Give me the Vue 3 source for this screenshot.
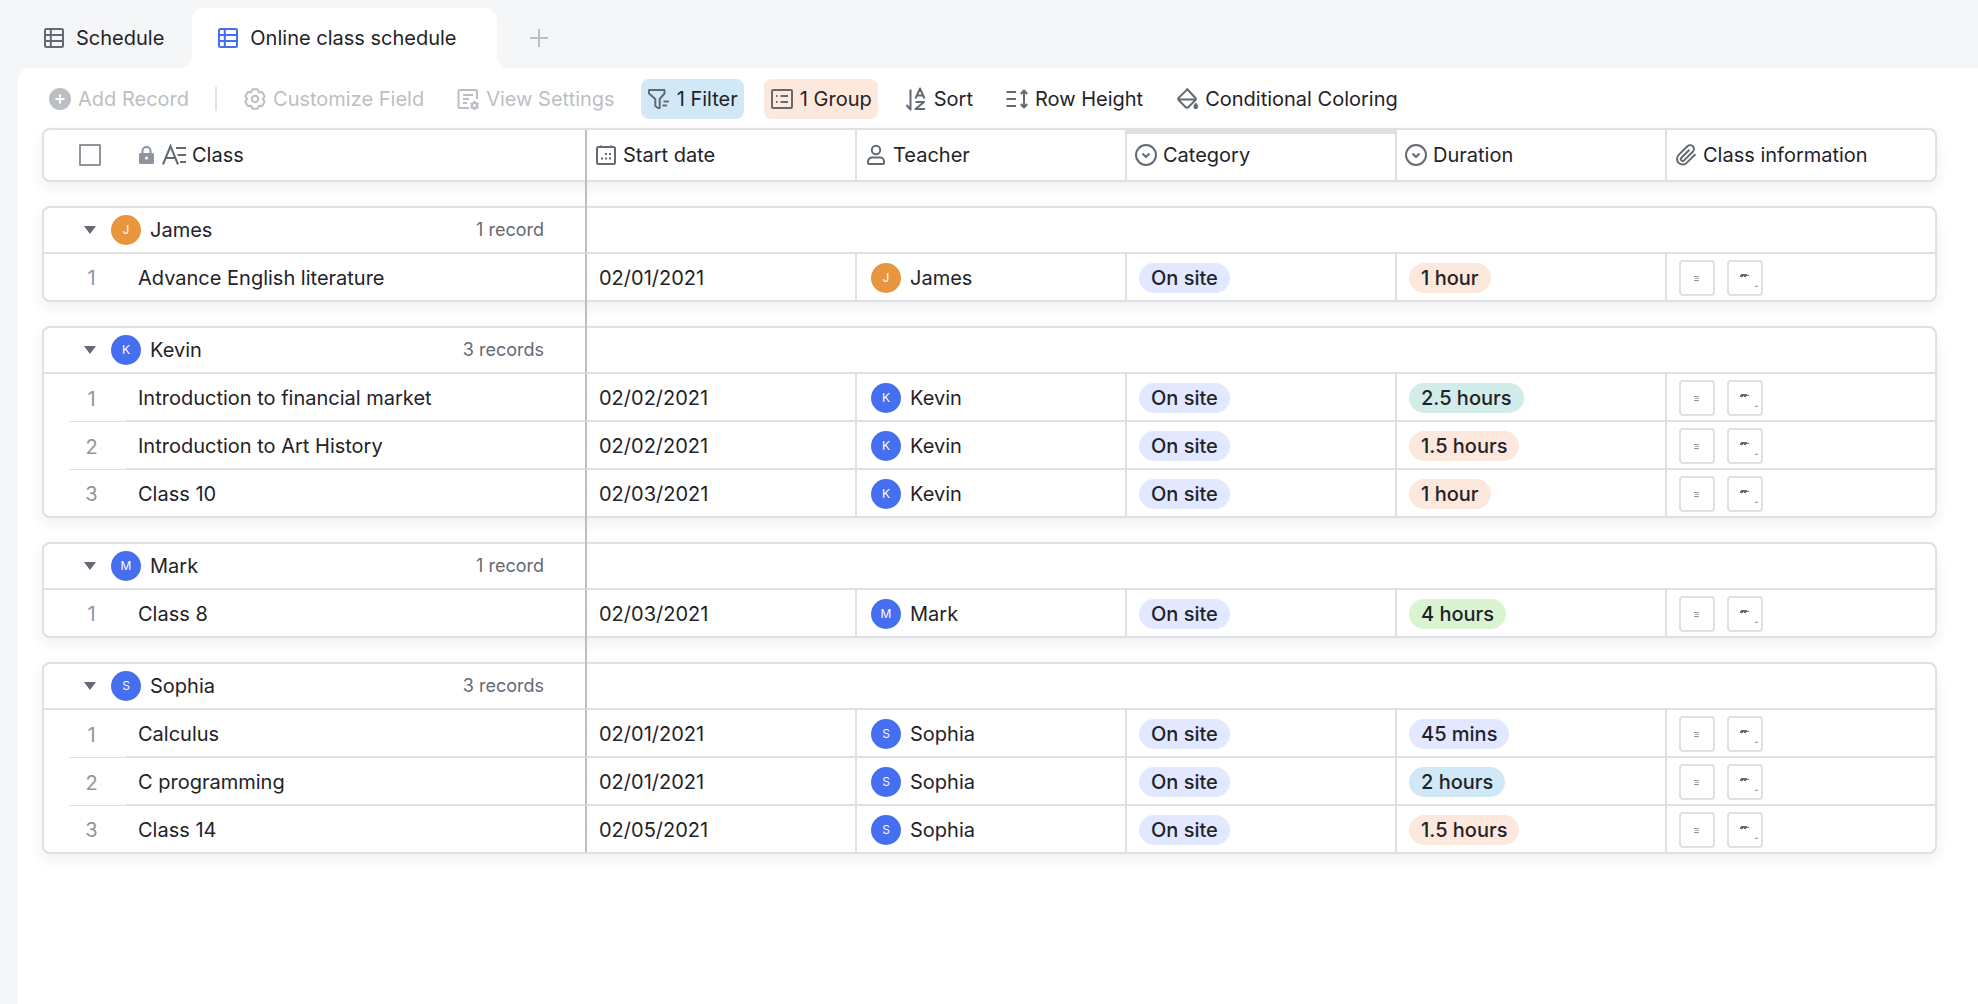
<script setup>
import { ref } from 'vue'

const icons = {
  grid: '<rect x="1" y="1" width="18" height="18" rx="1.5"/><path d="M6.8 1v18M1 7h18M1 13h18"/>',
  plus: '<path d="M10 1v18M1 10h18"/>',
  add: '<circle cx="12" cy="12" r="11" fill="currentColor" stroke="none"/><path d="M12 7.500v9M7.500 12h9" stroke="#fff"/>',
  gear: '<path d="M9.600 2.300h4.800L16 5.200l3.200-.1 2.400 4.100-1.700 2.800 1.700 2.800-2.400 4.100-3.200-.1-1.600 2.900H9.600L8 18.800l-3.200.1-2.400-4.100L4.100 12 2.400 9.200l2.400-4.100 3.200.1z"/><circle cx="12" cy="12" r="3.200"/>',
  view: '<path d="M13 21H4a1.500 1.500 0 0 1-1.500-1.500v-15A1.500 1.500 0 0 1 4 3h15.500A1.500 1.500 0 0 1 21 4.500V12M7 8h10M7 12h6M7 16h4"/><circle cx="18.500" cy="18.500" r="2.600" stroke-width="2.400"/><path d="M18.500 14v1.500M18.500 21.500V23M14.600 16.200l1.300.8M21 20l1.400.8M22.400 16.200L21 17M16 20l-1.400.8"/>',
  filter: '<path d="M2 3h15.500v3.500L12.700 12v9H11l-2.700-2v-7L2 6.500zM16.500 14.500H22M15.500 18.500h4.500"/>',
  group: '<rect x="2" y="3" width="20" height="18" rx="1"/><path d="M10.500 9H18M10.500 15H18M6 9h1.500M6 15h1.500"/>',
  sort: '<path d="M6.500 2.500v20L2.500 18M11.500 11.500L16 1.500l4.500 10M13 8.500h6M11.500 15h8.500l-8.500 7h9.500"/>',
  height: '<path d="M1.500 5H11M1.500 12H11M1.500 19H11M19 4v16M15.800 7L19 3.500 22.200 7M15.800 17l3.200 3.500 3.200-3.500"/>',
  bucket: '<path d="M11.500 1.500l9 9.500a1.500 1.500 0 0 1 0 2l-7 7a2 2 0 0 1-3 0l-7-7a1.500 1.500 0 0 1 0-2l8.800-8.600M3.500 12.500h17"/><path d="M20.800 15.500c1.600 2 2.400 3 2.400 4.300a2.400 2.400 0 0 1-4.800 0c0-1.300.8-2.300 2.400-4.300z" fill="currentColor" stroke="none"/>',
  date: '<rect x="2" y="3" width="18" height="17" rx="1.500"/><path d="M6 1.500V4M16 1.500V4"/><path d="M10 10h2M14 10h2M6 14.500h2M10 14.500h2M14 14.500h2"/>',
  user: '<circle cx="11" cy="6" r="4.200"/><path d="M3 17.500a4 4 0 0 1 4-4h8a4 4 0 0 1 4 4V19a1 1 0 0 1-1 1H4a1 1 0 0 1-1-1z"/>',
  select: '<circle cx="11" cy="11" r="10"/><path d="M7.500 9.500L11 13l3.500-3.500"/>',
  clip: '<path d="M20.400 10.200l-8.700 8.700a5.600 5.600 0 0 1-8-8l8.700-8.600a3.800 3.800 0 0 1 5.400 5.400l-8.700 8.700a1.900 1.900 0 0 1-2.700-2.700l8-8"/>'
}

const tabs = ['Schedule', 'Online class schedule']
const activeTab = ref(tabs[1])

const tools = [
  { label: 'Customize Field', icon: 'gear', disabled: true },
  { label: 'View Settings', icon: 'view', disabled: true },
  { label: '1 Filter', icon: 'filter', tone: 'sky' },
  { label: '1 Group', icon: 'group', tone: 'peach' },
  { label: 'Sort', icon: 'sort' },
  { label: 'Row Height', icon: 'height' },
  { label: 'Conditional Coloring', icon: 'bucket' }
]

const columns = [
  { label: 'Start date', icon: 'date' },
  { label: 'Teacher', icon: 'user' },
  { label: 'Category', icon: 'select', marked: true },
  { label: 'Duration', icon: 'select' },
  { label: 'Class information', icon: 'clip' }
]

const tones = {
  '45 mins': 'indigo',
  '1 hour': 'peach',
  '1.5 hours': 'peach',
  '2 hours': 'sky',
  '2.5 hours': 'teal',
  '4 hours': 'green'
}

const groups = ref([
  {
    teacher: 'James', color: 'orange', open: true,
    rows: [['Advance English literature', '02/01/2021', '1 hour']]
  },
  {
    teacher: 'Kevin', color: 'blue', open: true,
    rows: [
      ['Introduction to financial market', '02/02/2021', '2.5 hours'],
      ['Introduction to Art History', '02/02/2021', '1.5 hours'],
      ['Class 10', '02/03/2021', '1 hour']
    ]
  },
  {
    teacher: 'Mark', color: 'blue', open: true,
    rows: [['Class 8', '02/03/2021', '4 hours']]
  },
  {
    teacher: 'Sophia', color: 'blue', open: true,
    rows: [
      ['Calculus', '02/01/2021', '45 mins'],
      ['C programming', '02/01/2021', '2 hours'],
      ['Class 14', '02/05/2021', '1.5 hours']
    ]
  }
])
</script>

<template>
  <div class="app">
    <nav class="tabs">
      <button
        v-for="tab in tabs"
        :key="tab"
        type="button"
        class="tab"
        :class="{ active: tab === activeTab }"
        @click="activeTab = tab"
      >
        <svg class="icon tab-icon" viewBox="0 0 20 20" aria-hidden="true" v-html="icons.grid" />
        {{ tab }}
      </button>
      <button type="button" class="new-tab" aria-label="New view">
        <svg class="icon tab-icon" viewBox="0 0 20 20" aria-hidden="true" v-html="icons.plus" />
      </button>
    </nav>

    <main class="panel">
      <div class="toolbar">
        <button type="button" class="tool" disabled>
          <svg class="icon tool-icon" viewBox="0 0 24 24" aria-hidden="true" v-html="icons.add" />
          Add Record
        </button>
        <span class="divider"></span>
        <button
          v-for="tool in tools"
          :key="tool.label"
          type="button"
          class="tool"
          :class="tool.tone"
          :disabled="tool.disabled"
        >
          <svg class="icon tool-icon" viewBox="0 0 24 24" aria-hidden="true" v-html="icons[tool.icon]" />
          {{ tool.label }}
        </button>
      </div>

      <table class="records">
        <thead class="card">
          <tr class="row head">
            <th class="check" scope="col">
              <input type="checkbox" aria-label="Select all records" />
            </th>
            <th class="cell primary" scope="col">
              <svg class="lock" viewBox="0 0 18 20" aria-hidden="true">
                <path d="M4.500 9V6a4 4 0 0 1 8 0v3" fill="none" stroke="currentColor" stroke-width="2" />
                <rect x="1" y="8" width="15" height="11" rx="1.500" fill="currentColor" />
                <circle cx="8.500" cy="13" r="1.500" fill="#fff" />
              </svg>
              <svg class="text-field" viewBox="0 0 24 22" aria-hidden="true">
                <path
                  d="M1 20.500L8.500 2 16 20.500M4 14h9M14 4h10M15.500 11H24M18 18h6"
                  fill="none"
                  stroke="currentColor"
                  stroke-width="2"
                />
              </svg>
              Class
            </th>
            <th
              v-for="col in columns"
              :key="col.label"
              class="cell"
              :class="{ marked: col.marked }"
              scope="col"
            >
              <svg class="icon col-icon" viewBox="0 0 22 22" aria-hidden="true" v-html="icons[col.icon]" />
              {{ col.label }}
            </th>
          </tr>
        </thead>

        <tbody v-for="group in groups" :key="group.teacher" class="card">
          <tr class="row group-row">
            <th class="group-head" colspan="2" scope="rowgroup">
              <button
                type="button"
                class="toggle"
                :class="{ closed: !group.open }"
                :aria-expanded="group.open"
                :aria-label="'Toggle ' + group.teacher"
                @click="group.open = !group.open"
              ></button>
              <span class="avatar" :class="group.color">{{ group.teacher[0] }}</span>
              <span>{{ group.teacher }}</span>
              <span class="count">{{ group.rows.length }} {{ group.rows.length > 1 ? 'records' : 'record' }}</span>
            </th>
            <td class="filler" colspan="5"></td>
          </tr>
          <template v-if="group.open">
            <tr v-for="([name, date, duration], i) in group.rows" :key="name" class="row record">
              <td class="index">{{ i + 1 }}</td>
              <td class="cell primary">{{ name }}</td>
              <td class="cell">{{ date }}</td>
              <td class="cell teacher">
                <span class="avatar" :class="group.color">{{ group.teacher[0] }}</span>
                {{ group.teacher }}
              </td>
              <td class="cell"><span class="pill indigo">On site</span></td>
              <td class="cell"><span class="pill" :class="tones[duration]">{{ duration }}</span></td>
              <td class="cell files">
                <button type="button" class="file" aria-label="Open first attachment">
                  <svg viewBox="0 0 32 32" aria-hidden="true">
                    <path d="M13 14.500h5M13 18.500h5" stroke="#8f959e" />
                    <path d="M14 16.500h4" stroke="#a6abb2" />
                  </svg>
                </button>
                <button type="button" class="file" aria-label="Open second attachment">
                  <svg viewBox="0 0 32 32" aria-hidden="true">
                    <path d="M12 12.500h6M11 13.500h9M11 14.500h3M15 14.500h2" stroke="#646a73" />
                    <path d="M26 24.500h3M27 23.500h1" stroke="#a6abb2" />
                  </svg>
                </button>
              </td>
            </tr>
          </template>
        </tbody>
      </table>
    </main>
  </div>
</template>

<style>
body {
  margin: 0;
  background: #f5f6f7;
}
</style>

<style scoped>
.app {
  --line: #dee0e3;
  --frozen: #bbbfc4;
  --muted: #646a73;
  --ink: #1f2329;
  display: flex;
  flex-direction: column;
  box-sizing: border-box;
  min-height: 100vh;
  padding-left: 18px;
  background: #f5f6f7;
  color: var(--ink);
  font-family: Inter, "Liberation Sans", sans-serif;
  font-size: 20px;
  line-height: 24px;
}

button {
  padding: 0;
  border: 0;
  background: none;
  color: inherit;
  font: inherit;
  cursor: pointer;
}

.icon {
  flex: none;
  fill: none;
  stroke: currentColor;
  stroke-width: 2;
  stroke-linejoin: round;
}

.tabs {
  display: flex;
  height: 60px;
  padding-top: 8px;
}

.tab {
  position: relative;
  display: flex;
  align-items: center;
  gap: 12px;
  padding: 0 28px 0 26px;
  white-space: nowrap;
}

.tab-icon {
  width: 20px;
  height: 20px;
  color: var(--muted);
}

.tab.active {
  padding-right: 40px;
  border-radius: 12px 12px 0 0;
  background: #fff;
}

.tab.active .tab-icon {
  color: #456fee;
}

.tab.active::before,
.tab.active::after {
  content: "";
  position: absolute;
  bottom: 0;
  width: 12px;
  height: 12px;
}

.tab.active::before {
  right: 100%;
  background: radial-gradient(circle at 0 0, transparent 12px, #fff 12px);
}

.tab.active::after {
  left: 100%;
  background: radial-gradient(circle at 100% 0, transparent 12px, #fff 12px);
}

.new-tab {
  display: flex;
  align-items: center;
  padding: 0 32px;
}

.new-tab .tab-icon {
  color: var(--frozen);
}

.panel {
  flex: 1;
  padding: 0 41px 24px 24px;
  border-top-left-radius: 12px;
  background: #fff;
}

.toolbar {
  display: flex;
  align-items: center;
  gap: 20px;
  box-sizing: border-box;
  height: 60px;
  padding-top: 2px;
}

.tool {
  display: flex;
  align-items: center;
  gap: 6px;
  height: 40px;
  padding: 0 6px;
  border-radius: 8px;
  white-space: nowrap;
}

.tool:disabled {
  color: #bbbfc4;
  cursor: default;
}

.tool-icon {
  width: 24px;
  height: 24px;
}

.tool:enabled .tool-icon {
  color: var(--muted);
}

.divider {
  width: 2px;
  height: 24px;
  background: var(--line);
}

.records {
  display: flex;
  flex-direction: column;
  gap: 24px;
}

.card {
  display: block;
  border: 2px solid var(--line);
  border-radius: 8px;
  background: #fff;
  box-shadow: 0 6px 14px rgba(31, 45, 55, 0.07);
}

.row {
  display: grid;
  grid-template-columns: 82px minmax(0, 461fr) repeat(4, minmax(0, 270fr)) minmax(0, 268fr);
}

th {
  font-weight: 400;
  text-align: left;
}

th,
td {
  box-sizing: border-box;
  padding: 0;
  white-space: nowrap;
}

.cell {
  display: flex;
  align-items: center;
  height: 48px;
  padding-left: 12px;
  border-right: 2px solid var(--line);
  border-bottom: 2px solid var(--line);
}

.cell:last-child {
  border-right: 0;
}

.cell.primary {
  border-right-color: var(--frozen);
}

.record .cell,
.record .index {
  padding-top: 2px;
}

.head .cell {
  gap: 6px;
  height: 50px;
  padding-left: 8px;
  border-bottom: 0;
}

.head .cell.primary {
  padding-left: 12px;
}

.head .marked {
  box-shadow: inset 0 4px var(--line);
}

.check {
  display: flex;
  align-items: center;
  padding-left: 35px;
}

.check input {
  appearance: none;
  box-sizing: border-box;
  width: 22px;
  height: 22px;
  margin: 0;
  border: 2px solid #8f959e;
  border-radius: 1px;
  background: #fff;
}

.check input:checked {
  background: #456fee;
}

.lock {
  width: 18px;
  height: 20px;
  color: #8f959e;
}

.text-field {
  width: 24px;
  height: 22px;
  color: var(--muted);
}

.col-icon {
  width: 22px;
  height: 22px;
  color: var(--muted);
}

.group-head {
  position: relative;
  display: flex;
  grid-column: span 2;
  align-items: center;
  height: 46px;
  padding: 0 41px 0 40px;
  border-right: 2px solid var(--frozen);
  border-bottom: 2px solid var(--line);
}

/* carries the frozen-column line across the gap above each group */
.group-head::before {
  content: "";
  position: absolute;
  right: -2px;
  bottom: 100%;
  width: 2px;
  height: 28px;
  background: var(--frozen);
}

.filler {
  grid-column: span 5;
  border-bottom: 2px solid var(--line);
}

.toggle {
  width: 12px;
  height: 8px;
  margin-right: 15px;
  background: var(--muted);
  clip-path: polygon(0 0, 100% 0, 50% 100%);
}

.toggle.closed {
  rotate: -90deg;
}

.avatar {
  display: flex;
  flex: none;
  align-items: center;
  justify-content: center;
  width: 30px;
  height: 30px;
  margin-right: 9px;
  border-radius: 50%;
  color: #fff;
  font-size: 12px;
}

.orange {
  background: #e8953f;
}

.blue {
  background: #456fee;
}

.count {
  margin-left: auto;
  color: var(--muted);
  font-size: 18px;
}

.index {
  display: flex;
  align-items: center;
  justify-content: center;
  margin-left: 25px;
  padding-right: 12px;
  border-bottom: 1px solid var(--line);
  color: #8f959e;
}

.record:last-child .cell {
  height: 46px;
  border-bottom: 0;
}

.record:last-child .index {
  border-bottom: 0;
}

.teacher {
  padding-left: 14px;
}

.pill {
  height: 30px;
  padding: 0 12px;
  border-radius: 15px;
  font-weight: 500;
  line-height: 30px;
}

.indigo {
  background: #e1e8ff;
}

.sky {
  background: #d1e8f7;
}

.peach {
  background: #fde8dd;
}

.teal {
  background: #d2ecea;
}

.green {
  background: #d8f4d1;
}

.files {
  gap: 12px;
}

.file {
  box-sizing: border-box;
  width: 36px;
  height: 36px;
  border: 2px solid var(--line);
  border-radius: 4px;
  background: #fff;
}

.file svg {
  display: block;
  width: 32px;
  height: 32px;
}
</style>
